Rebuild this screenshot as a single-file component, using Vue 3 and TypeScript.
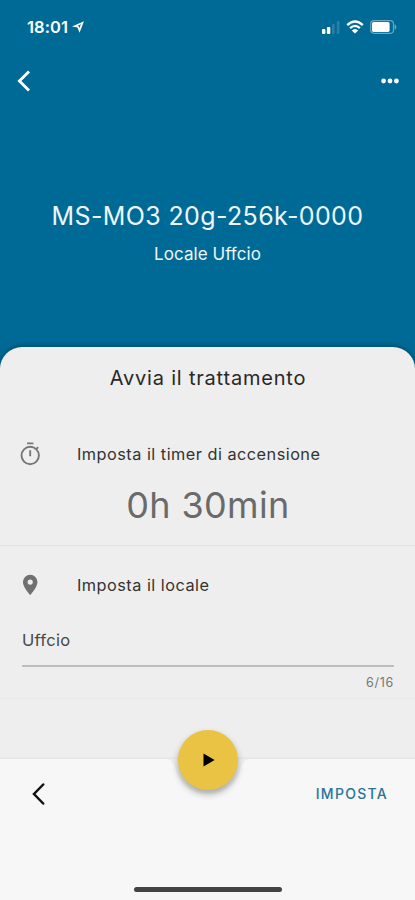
<script setup lang="ts">
import { computed, ref } from 'vue'

const device = 'MS-MO3 20g-256k-0000'
const room = ref('Uffcio')
const maxLength = 16
const counter = computed(() => `${room.value.length}/${maxLength}`)
</script>

<template>
  <main class="screen">
    <header class="status">
      <div class="clock">
        <span class="time">18:01</span>
        <svg class="arrow" viewBox="0 0 12 12"><path fill-rule="evenodd" d="M0 5.500 12 .2 7.500 11.800 5.500 6.500ZM6.800 5.300l.6 2 1.500-4-3.200 1.400Z" /></svg>
      </div>
      <div class="indicators">
        <svg width="18" height="13" viewBox="0 0 18 13">
          <rect x="0" y="8" width="3.4" height="5" rx="1" />
          <rect x="4.9" y="6" width="3.4" height="7" rx="1" />
          <rect class="faint" x="10" y="3" width="2.6" height="10" rx="1" />
          <rect class="faint" x="14.8" y="0" width="2.6" height="13" rx="1" />
        </svg>
        <svg width="18" height="14" viewBox="0 0 18 14">
          <path class="wave" d="M1.2 5.1Q9-2.1 16.8 5.1M4.1 8.1Q9 3.7 13.9 8.1" />
          <path d="M5.8 10.4Q9 7.4 12.2 10.4L9 13.6Z" />
        </svg>
        <svg width="27" height="14" viewBox="0 0 27 14">
          <rect class="case" x=".7" y=".7" width="22.8" height="12.6" rx="3.2" />
          <rect x="2" y="2.1" width="17.6" height="9.8" rx="1.6" />
          <path class="cap" d="M24.6 4.3Q26.4 5 26.4 7T24.6 9.7Z" />
        </svg>
      </div>
    </header>

    <nav class="toolbar">
      <svg width="14" height="22" viewBox="0 0 14 22"><path class="back" d="M12 1.4 2.4 11 12 20.6" /></svg>
      <svg width="18" height="6" viewBox="0 0 18 6">
        <circle cx="2.6" cy="3" r="2.4" /><circle cx="9" cy="3" r="2.4" /><circle cx="15.4" cy="3" r="2.4" />
      </svg>
    </nav>

    <section class="hero">
      <h1>{{ device }}</h1>
      <p>Locale {{ room }}</p>
    </section>

    <section class="sheet">
      <h2>Avvia il trattamento</h2>

      <div class="block timer">
        <div class="row">
          <svg width="22" height="24" viewBox="0 0 22 24">
            <circle class="line" cx="10.2" cy="13.5" r="8.7" />
            <path class="line" d="M7 1.4h6.4M10.2 8.3v6M16.2 7.2l2-2" />
          </svg>
          <span>Imposta il timer di accensione</span>
        </div>
        <div class="duration">0h 30min</div>
      </div>

      <div class="block place">
        <div class="row">
          <svg width="22" height="24" viewBox="0 0 22 24">
            <path fill-rule="evenodd" d="M10.2 1.8a7.3 7.3 0 0 0-7.3 7.3c0 5.4 7.3 13 7.3 13s7.3-7.6 7.3-13a7.3 7.3 0 0 0-7.3-7.3Zm0 4.7a2.6 2.6 0 1 1 0 5.2 2.6 2.6 0 0 1 0-5.2Z" />
          </svg>
          <span>Imposta il locale</span>
        </div>
        <div class="field">{{ room }}</div>
        <div class="counter">{{ counter }}</div>
      </div>
    </section>

    <footer class="bottom">
      <svg class="notch" width="100" height="42" viewBox="0 0 100 42">
        <path class="cut" d="M5 0C14 0 16 4 17.500 10C22 26 34 35 50 35S78 26 82.500 10C84 4 86 0 95 0Z" />
      </svg>
      <button class="play" type="button" aria-label="Avvia">
        <svg width="12" height="14" viewBox="0 0 12 14"><path d="M.5.4v13.200L11.600 7Z" /></svg>
      </button>
      <svg class="prev" width="13" height="22" viewBox="0 0 13 22"><path d="M11.200 1.500 2 11 11.200 20.500" /></svg>
      <button class="submit" type="button">IMPOSTA</button>
      <span class="home"></span>
    </footer>
  </main>
</template>

<style>
body {
  background: #006a96;
}
</style>

<style scoped>
.screen {
  display: flex;
  flex-direction: column;
  width: 415px;
  height: 900px;
  overflow: hidden;
  background: #006a96;
  font-family: Inter, Roboto, sans-serif;
  color: #333;
}
svg {
  display: block;
  flex: none;
}
.status {
  display: flex;
  justify-content: space-between;
  align-items: center;
  height: 54px;
  padding: 0 18px 0 27px;
  box-sizing: border-box;
  color: #fff;
}
.clock,
.indicators {
  display: flex;
  align-items: center;
}
.clock {
  gap: 4px;
}
.time {
  font-size: 16.5px;
  font-weight: 600;
  letter-spacing: 0.1px;
}
.arrow {
  width: 12px;
  height: 12px;
}
.indicators {
  gap: 6px;
}
.status svg,
.toolbar svg {
  fill: #fff;
}
.status .faint {
  fill: #2b7fa4;
}
.status .wave {
  fill: none;
  stroke: #fff;
  stroke-width: 2.3;
}
.status .case {
  fill: none;
  stroke: #68a8c1;
  stroke-width: 1.2;
}
.status .cap {
  fill: #68a8c1;
}
.toolbar {
  display: flex;
  justify-content: space-between;
  align-items: center;
  height: 53px;
  padding: 0 16px 0 17px;
}
.toolbar .back {
  fill: none;
  stroke: #fff;
  stroke-width: 2.8;
}
.hero {
  height: 240px;
  padding-top: 92px;
  box-sizing: border-box;
  text-align: center;
  color: #eef6fa;
}
h1,
h2,
p {
  margin: 0;
  font-weight: 400;
}
h1 {
  font-size: 25px;
  line-height: 34px;
  letter-spacing: 0.37px;
}
p {
  margin-top: 9px;
  font-size: 17px;
  line-height: 24px;
  letter-spacing: 0.05px;
}
.sheet {
  height: 412px;
  background: #eee;
  border-radius: 22px 22px 0 0;
  box-shadow: 0 -1px 5px rgba(0, 0, 0, 0.35);
}
h2 {
  padding: 17px 0 0 1px;
  height: 59px;
  font-size: 20px;
  line-height: 28px;
  letter-spacing: 0.8px;
  text-align: center;
  color: #282828;
}
.block {
  box-sizing: border-box;
  border-bottom: 1px solid #e3e3e3;
}
.timer {
  height: 123px;
  padding-top: 19px;
}
.row {
  display: flex;
  align-items: center;
  gap: 35px;
  height: 24px;
  padding-left: 20px;
  font-size: 16.3px;
  letter-spacing: 0.48px;
}
.row svg {
  fill: #707070;
}
.row .line {
  fill: none;
  stroke: #777;
  stroke-width: 1.9;
}
.duration {
  margin-top: 16px;
  padding-left: 1px;
  font-size: 36px;
  font-weight: 400;
  line-height: 46px;
  letter-spacing: 0.35px;
  text-align: center;
  color: #6a6a6a;
}
.place {
  height: 153px;
  padding-top: 27px;
  border-color: #e9e9e9;
}
.field {
  height: 57px;
  margin: 13px 21px 0 22px;
  padding-top: 18px;
  box-sizing: border-box;
  border-bottom: 2px solid #bdbdbd;
  font-size: 16.5px;
  line-height: 24px;
  letter-spacing: 0.3px;
  color: #484848;
}
.counter {
  margin: 7px 21px 0 0;
  font-size: 12.5px;
  line-height: 18px;
  letter-spacing: 0.7px;
  text-align: right;
  color: #777;
}
.bottom {
  position: relative;
  display: flex;
  justify-content: space-between;
  align-items: center;
  height: 141px;
  padding: 0 27px 72px 32px;
  box-sizing: border-box;
  background: #f7f7f7;
  box-shadow: 0 -1px 2px rgba(0, 0, 0, 0.05);
}
.notch {
  position: absolute;
  top: 0;
  left: 158px;
}
.cut {
  fill: #eee;
}
button {
  padding: 0;
  border: 0;
  background: none;
  font-family: inherit;
}
.play {
  position: absolute;
  top: -29px;
  left: 178px;
  display: flex;
  align-items: center;
  justify-content: center;
  width: 60px;
  height: 60px;
  padding-left: 2px;
  border-radius: 50%;
  background: #eac345;
  box-shadow: 0 4px 7px rgba(0, 0, 0, 0.3);
}
.prev path {
  fill: none;
  stroke: #111;
  stroke-width: 2.5;
  stroke-linecap: round;
}
.submit {
  font-size: 14px;
  font-weight: 500;
  letter-spacing: 1.3px;
  color: #287499;
}
.home {
  position: absolute;
  bottom: 8px;
  left: 134px;
  width: 148px;
  height: 5px;
  border-radius: 3px;
  background: #444;
}
</style>
